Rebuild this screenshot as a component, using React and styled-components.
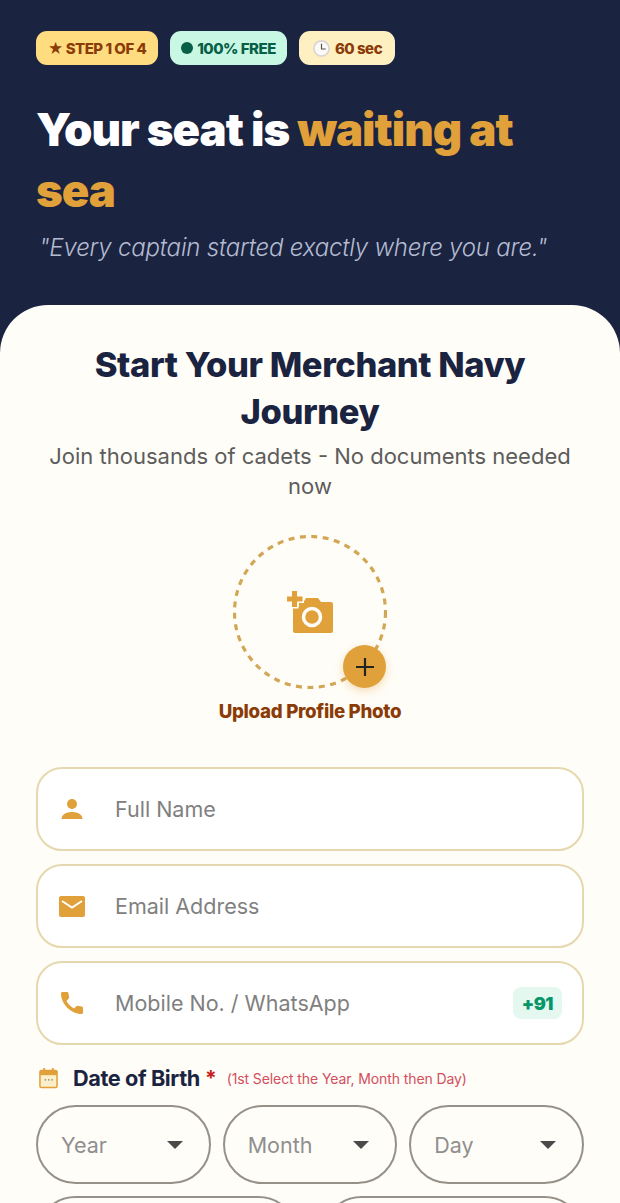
import React from "react";
import styled, { createGlobalStyle } from "styled-components";

const Global = createGlobalStyle`
  html, body { margin: 0; padding: 0; background: #1a2340; }
  * { box-sizing: border-box; }
  body { font-family: Inter, "Noto Sans", sans-serif; }
`;

const Page = styled.div`
  width: 620px;
  height: 1203px;
  overflow: hidden;
  background: #1a2340;
  display: flex;
  flex-direction: column;
`;

const Hero = styled.header`
  height: 305px;
  flex: none;
  padding: 31px 36px 0;
`;

const Badges = styled.div`
  display: flex;
  gap: 12px;
`;

const Badge = styled.span`
  width: ${(p) => p.$width}px;
  height: 34px;
  border-radius: 11px;
  display: inline-flex;
  align-items: center;
  justify-content: center;
  gap: 4px;
  font-size: 15px;
  font-weight: 800;
  letter-spacing: -0.5px;
  white-space: nowrap;
  color: ${(p) => p.$color};
  background: ${(p) => p.$bg};
`;

const Dot = styled.i`
  width: 12px;
  height: 12px;
  border-radius: 50%;
  background: #065f46;
`;

const Title = styled.h1`
  margin: 34px 0 0;
  width: 500px;
  font-size: 45.5px;
  line-height: 61px;
  font-weight: 900;
  letter-spacing: -1px;
  color: #fff;
`;

const Accent = styled.span`
  color: #e0a03a;
`;

const Quote = styled.p`
  margin: 10px 0 0 3px;
  font-size: 24px;
  line-height: 34px;
  font-style: italic;
  font-weight: 300;
  letter-spacing: -0.2px;
  white-space: nowrap;
  color: #b4bbd1;
`;

const Sheet = styled.main`
  flex: 1;
  background: #fffdf7;
  border-radius: 48px 48px 0 0;
  padding: 35px 36px 0;
  display: flex;
  flex-direction: column;
`;

const Heading = styled.h2`
  margin: 1px auto 0;
  width: 480px;
  text-align: center;
  font-size: 34.5px;
  line-height: 47px;
  font-weight: 800;
  letter-spacing: -0.4px;
  color: #1a2340;
`;

const Sub = styled.p`
  margin: 6px 0 0;
  text-align: center;
  font-size: 22px;
  line-height: 30px;
  font-weight: 400;
  color: #5c5c5c;
`;

const Upload = styled.div`
  margin-top: 34px;
  display: flex;
  flex-direction: column;
  align-items: center;
`;

const Ring = styled.div`
  position: relative;
  width: 154px;
  height: 154px;
  display: flex;
  align-items: center;
  justify-content: center;
`;

const RingLine = styled.svg`
  position: absolute;
  inset: 0;
`;

const CameraIcon = styled.svg`
  position: relative;
`;

const PlusButton = styled.div`
  position: absolute;
  right: 1px;
  bottom: 1px;
  width: 43px;
  height: 43px;
  border-radius: 50%;
  background: #e0a03a;
  box-shadow: 0 3px 8px rgba(224, 160, 58, 0.35);
  display: flex;
  align-items: center;
  justify-content: center;
`;

const UploadLabel = styled.div`
  margin-top: 10px;
  font-size: 18.7px;
  line-height: 26px;
  font-weight: 800;
  letter-spacing: -0.3px;
  color: #8a3b08;
`;

const Fields = styled.div`
  margin-top: 42px;
  display: flex;
  flex-direction: column;
  gap: 13px;
`;

const Field = styled.div`
  height: 84px;
  border: 2px solid #e6d8ae;
  border-radius: 26px;
  background: #fff;
  display: flex;
  align-items: center;
  padding: 0 20px;
`;

const FieldIcon = styled.span`
  width: 28px;
  height: 28px;
  flex: none;
  display: flex;
  align-items: center;
  justify-content: center;
`;

const Placeholder = styled.span`
  margin-left: 29px;
  flex: 1;
  font-size: 21.5px;
  font-weight: 400;
  color: #808080;
`;

const Prefix = styled.span`
  height: 32px;
  padding: 0 9px;
  border-radius: 8px;
  background: #e5f8f0;
  color: #059669;
  font-size: 18px;
  font-weight: 900;
  letter-spacing: -0.5px;
  display: flex;
  align-items: center;
`;

const DobLabel = styled.div`
  margin-top: 19px;
  padding-left: 3px;
  height: 28px;
  display: flex;
  align-items: center;
`;

const DobText = styled.span`
  margin-left: 15px;
  font-size: 21.7px;
  font-weight: 700;
  letter-spacing: -0.4px;
  color: #1a2340;
`;

const Star = styled.span`
  margin-left: 5px;
  font-size: 21px;
  font-weight: 700;
  color: #c81e1e;
`;

const Hint = styled.span`
  margin-left: 10px;
  font-size: 14px;
  letter-spacing: -0.1px;
  color: #d24f5f;
`;

const DobRow = styled.div`
  margin-top: 13px;
  display: grid;
  grid-template-columns: repeat(3, 1fr);
  gap: 12px;
`;

const Select = styled.div`
  height: 79px;
  border: 2px solid #969188;
  border-radius: 40px;
  display: flex;
  align-items: center;
  justify-content: space-between;
  padding: 0 26px 0 23px;
  font-size: 21.5px;
  color: #8f8f8f;
`;

const Caret = styled.i`
  width: 0;
  height: 0;
  border-left: 8px solid transparent;
  border-right: 8px solid transparent;
  border-top: 8px solid #4a4a4a;
`;

const NextRow = styled.div`
  margin-top: 12px;
  display: grid;
  grid-template-columns: 1fr 1fr;
  gap: 24px;
`;

const gold = "#e0a03a";

const App = () => (
  <Page>
    <Global />
    <Hero>
      <Badges>
        <Badge $width={122} $bg="#ffdc80" $color="#8a3b08">★ STEP 1 OF 4</Badge>
        <Badge $width={117} $bg="#c8f7e3" $color="#065f46"><Dot />100% FREE</Badge>
        <Badge $width={96} $bg="#fff0c2" $color="#8a3b08">
          <svg width="19" height="19" viewBox="0 0 18 18">
            <circle cx="9" cy="9" r="8" fill="#d9d6d2" />
            <circle cx="9" cy="9" r="6.4" fill="#fbfaf8" />
            <path d="M9 4.500V9.500H13" fill="none" stroke="#55504a" strokeWidth="1.1" />
          </svg>
          60 sec
        </Badge>
      </Badges>
      <Title>Your seat is <Accent>waiting at sea</Accent></Title>
      <Quote>"Every captain started exactly where you are."</Quote>
    </Hero>
    <Sheet>
      <Heading>Start Your Merchant Navy Journey</Heading>
      <Sub>Join thousands of cadets - No documents needed now</Sub>
      <Upload>
        <Ring>
          <RingLine width="154" height="154" viewBox="0 0 154 154">
            <circle cx="77" cy="77" r="75.5" fill="none" stroke="#d3a655" strokeWidth="3.2" strokeDasharray="6 5.500" />
          </RingLine>
          <CameraIcon width="46" height="43" viewBox="0 0 46 43">
            <path fill={gold} d="M6 16h6v-4h4l3-5h12l3 4h10a2 2 0 0 1 2 2v27a2 2 0 0 1-2 2H8a2 2 0 0 1-2-2z" />
            <path d="M0 5.500h5V0h5v5.500h5.500v5H10V16H5v-5.500H0z" fill={gold} stroke="#fffdf7" strokeWidth="3" paintOrder="stroke" />
            <circle cx="25" cy="26" r="8.500" fill={gold} stroke="#fffdf7" strokeWidth="3.500" />
          </CameraIcon>
          <PlusButton>
            <svg width="20" height="20" viewBox="0 0 20 20">
              <path d="M10 1v18M1 10h18" stroke="#232323" strokeWidth="2.2" />
            </svg>
          </PlusButton>
        </Ring>
        <UploadLabel>Upload Profile Photo</UploadLabel>
      </Upload>
      <Fields>
        <Field>
          <FieldIcon>
            <svg width="22" height="22" viewBox="0 0 22 22" fill={gold}>
              <circle cx="11" cy="6" r="5" />
              <path d="M0.500 21c0-4.500 5-7 10.500-7s10.500 2.500 10.500 7z" />
            </svg>
          </FieldIcon>
          <Placeholder>Full Name</Placeholder>
        </Field>
        <Field>
          <FieldIcon>
            <svg width="26" height="21" viewBox="0 0 26 21">
              <rect width="26" height="21" rx="2" fill={gold} />
              <path d="M3 5l10 6.500L23 5" fill="none" stroke="#fff" strokeWidth="2" />
            </svg>
          </FieldIcon>
          <Placeholder>Email Address</Placeholder>
        </Field>
        <Field>
          <FieldIcon>
            <svg width="24" height="24" viewBox="0 0 24 24" fill={gold}>
              <path d="M1 2.500C1 1.500 1.700 1 2.500 1H7c.8 0 1.300.5 1.400 1.200l.7 4c.1.5 0 1-.4 1.400L6.500 10c1.600 3.200 4.300 5.900 7.500 7.500l2.400-2.300c.4-.3.900-.5 1.400-.4l4 .7c.7.100 1.200.6 1.200 1.400v4.600c0 .8-.6 1.500-1.500 1.500C11 23 1 13 1 2.500z" />
            </svg>
          </FieldIcon>
          <Placeholder>Mobile No. / WhatsApp</Placeholder>
          <Prefix>+91</Prefix>
        </Field>
      </Fields>
      <DobLabel>
        <svg width="19" height="22" viewBox="0 0 20 22">
          <rect x="1" y="3" width="18" height="18" rx="1.500" fill="#fbeecb" stroke={gold} strokeWidth="1.600" />
          <path d="M1 3h18v5H1z" fill={gold} />
          <path d="M5.500 0.500v4M14.500 0.500v4" stroke={gold} strokeWidth="2" />
          <path d="M6 13h1.500M9.500 13H11M13 13h1.500" stroke="#8a7a55" strokeWidth="1.400" />
        </svg>
        <DobText>Date of Birth</DobText>
        <Star>*</Star>
        <Hint>(1st Select the Year, Month then Day)</Hint>
      </DobLabel>
      <DobRow>
        <Select>Year<Caret /></Select>
        <Select>Month<Caret /></Select>
        <Select>Day<Caret /></Select>
      </DobRow>
      <NextRow>
        <Select />
        <Select />
      </NextRow>
    </Sheet>
  </Page>
);

export default App;
